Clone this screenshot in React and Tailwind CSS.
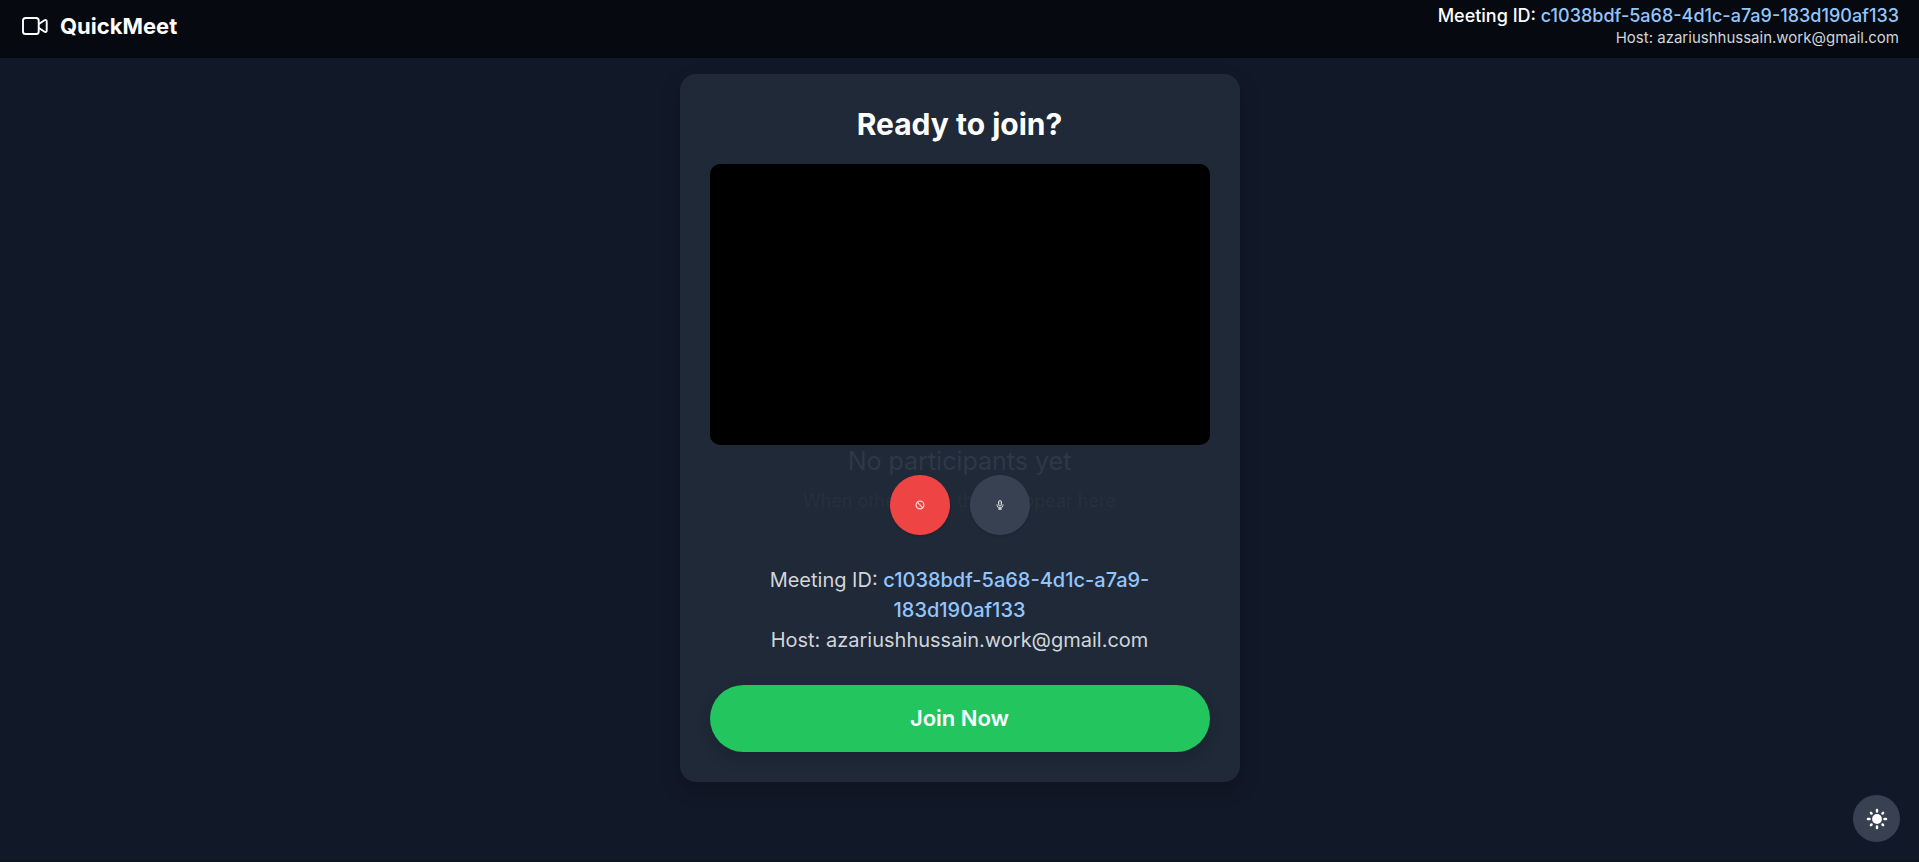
const MEETING_ID = "c1038bdf-5a68-4d1c-a7a9-183d190af133";
const HOST = "azariushhussain.work@gmail.com";

function VideoIcon() {
  return (
    <svg className="size-7" viewBox="0 0 28 28" fill="none" stroke="currentColor" strokeWidth="1.9" strokeLinejoin="round" strokeLinecap="round" aria-hidden="true">
      <rect x="3" y="6" width="15.700" height="16" rx="2.6" />
      <path d="M18.900 12l5.600-3.700c1-.6 2.200-.2 2.200 1v9.400c0 1.200-1.200 1.600-2.200 1L18.900 16" />
    </svg>
  );
}

function BlockedIcon() {
  return (
    <svg className="size-2.5" viewBox="0 0 10 10" fill="none" stroke="currentColor" strokeWidth="1.2" aria-hidden="true">
      <circle cx="5" cy="5" r="3.9" />
      <path d="M2.200 2.200l5.600 5.600" />
    </svg>
  );
}

function MicIcon() {
  return (
    <svg className="size-2.5" viewBox="0 0 10 10" fill="none" stroke="currentColor" strokeWidth="1" aria-hidden="true">
      <rect x="3.500" y="0.500" width="3" height="5.500" rx="1.500" fill="currentColor" fillOpacity="0.3" />
      <path d="M2 4.200v1a3 2.500 0 0 0 6 0v-1M5 7.800v1.700" />
      <path d="M3.200 9h3.600" strokeWidth="1.500" />
    </svg>
  );
}

function SunIcon() {
  return (
    <svg className="size-6" viewBox="0 0 24 24" fill="none" stroke="currentColor" strokeWidth="2.500" strokeLinecap="round" aria-hidden="true">
      <circle cx="12" cy="12" r="4.900" fill="currentColor" stroke="none" />
      <path d="M12 3v1.500M12 19.500v1.500M3 12h1.500M19.500 12h1.500M5.900 5.900l.6.6M17.500 17.500l.6.6M5.900 18.100l.6-.6M17.500 6.500l.6-.6" />
    </svg>
  );
}

export default function App() {
  return (
    <div className="relative flex min-h-screen flex-col bg-[#111827] font-[Inter,sans-serif] text-white">
      <header className="flex h-[58px] items-center justify-between bg-[#06090f] px-5">
        <div className="flex items-center gap-3 pb-1.5">
          <VideoIcon />
          <h1 className="text-[22px] leading-8 font-bold">QuickMeet</h1>
        </div>
        <div className="pb-1.5 text-right">
          <p className="text-lg leading-6 font-medium">
            Meeting ID: <span className="text-[#93c5fd]">{MEETING_ID}</span>
          </p>
          <p className="text-[15px] leading-5 text-[#d1d5db]">Host: {HOST}</p>
        </div>
      </header>

      <main className="flex flex-1 flex-col items-center px-4 pt-4 pb-10">
        <section className="w-full max-w-[560px] rounded-2xl bg-[#1f2937] p-[30px] text-center shadow-[0_8px_20px_rgba(0,0,0,0.2)]">
          <h2 className="mb-5 text-[30px] leading-10 font-bold">Ready to join?</h2>
          <div className="aspect-video w-full rounded-[10px] bg-black" />
          <div className="relative">
            <div className="absolute inset-x-0 top-0 text-center">
              <p className="text-[25px] leading-8 text-[#2e3846]">No participants yet</p>
              <p className="mt-3 text-lg leading-6 text-[#26303d]">When others join, they'll appear here</p>
            </div>
            <div className="relative flex justify-center gap-5 pt-[30px]">
              <button type="button" aria-label="Turn camera on" className="flex size-[60px] items-center justify-center rounded-full bg-[#ef4444] text-[#fbd5d5] shadow-sm">
                <BlockedIcon />
              </button>
              <button type="button" aria-label="Mute microphone" className="flex size-[60px] items-center justify-center rounded-full bg-[#374151] text-[#d1d5db] shadow-sm">
                <MicIcon />
              </button>
            </div>
          </div>
          <div className="mx-auto mt-[30px] max-w-[400px] text-xl leading-[30px] text-[#d1d5db]">
            <p>
              Meeting ID: <span className="font-medium text-[#93c5fd]">{MEETING_ID}</span>
            </p>
            <p>Host: {HOST}</p>
          </div>
          <button type="button" className="mt-[30px] w-full rounded-full bg-[#22c55e] py-[17px] text-[22px] leading-[33px] font-semibold shadow-[0_6px_15px_rgba(0,0,0,0.15)]">
            Join Now
          </button>
        </section>
      </main>

      <div className="absolute inset-x-0 bottom-0 h-0.5 bg-[#0f131f]" />
      <button type="button" aria-label="Switch theme" className="fixed right-[19px] bottom-5 flex size-[47px] items-center justify-center rounded-full bg-[#374151]">
        <SunIcon />
      </button>
    </div>
  );
}
